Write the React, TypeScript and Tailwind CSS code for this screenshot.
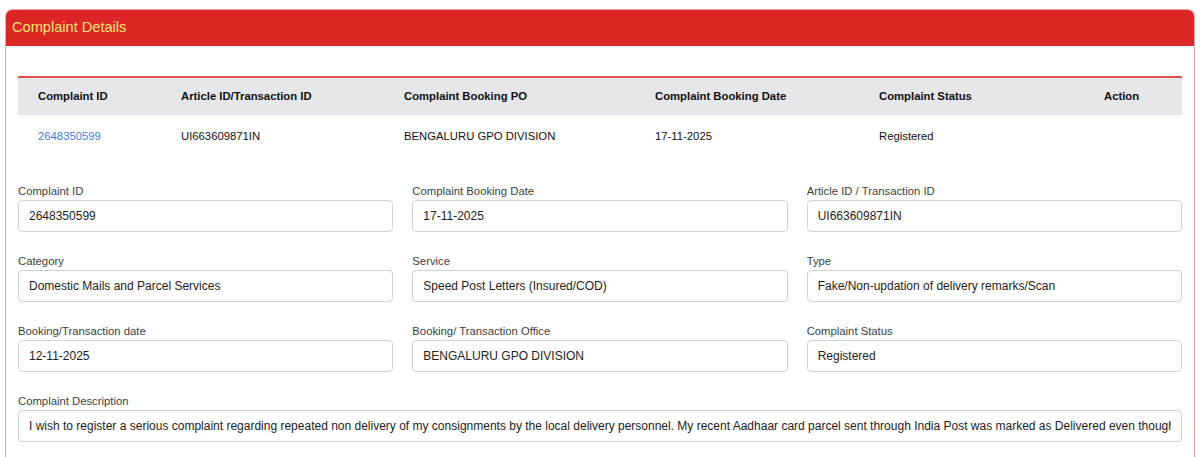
import React from "react";

const cols = [
  { label: "Complaint ID", w: "w-[143px]" },
  { label: "Article ID/Transaction ID", w: "w-[223px]" },
  { label: "Complaint Booking PO", w: "w-[251px]" },
  { label: "Complaint Booking Date", w: "w-[224px]" },
  { label: "Complaint Status", w: "w-[225px]" },
  { label: "Action", w: "" },
];

const fields = [
  { label: "Complaint ID", value: "2648350599" },
  { label: "Complaint Booking Date", value: "17-11-2025" },
  { label: "Article ID / Transaction ID", value: "UI663609871IN" },
  { label: "Category", value: "Domestic Mails and Parcel Services" },
  { label: "Service", value: "Speed Post Letters (Insured/COD)" },
  { label: "Type", value: "Fake/Non-updation of delivery remarks/Scan" },
  { label: "Booking/Transaction date", value: "12-11-2025" },
  { label: "Booking/ Transaction Office", value: "BENGALURU GPO DIVISION" },
  { label: "Complaint Status", value: "Registered" },
];

const description =
  "I wish to register a serious complaint regarding repeated non delivery of my consignments by the local delivery personnel. My recent Aadhaar card parcel sent through India Post was marked as Delivered even though I never received it.";

function Field({ label, value }: { label: string; value: string }) {
  return (
    <div className="flex flex-col">
      <label className="mb-[2px] text-[11.3px] leading-[14px] text-[#3a3f45]">{label}</label>
      <input
        readOnly
        value={value}
        className="h-[32px] w-full rounded-[4px] border border-[#cdd2d8] bg-white px-[10px] text-[12px] text-[#1d1d1d] outline-none"
      />
    </div>
  );
}

export default function App() {
  return (
    <div className="min-h-screen bg-white pt-[9px] px-[5px] font-['Liberation_Sans',Arial,sans-serif]">
      <div className="rounded-t-[7px] border border-[#f0a3a3] overflow-hidden">
        <div className="flex h-[36px] items-center bg-[#dc2626] pl-[6px]">
          <h2 className="text-[14.6px] text-[#ffe47a]">Complaint Details</h2>
        </div>

        <div className="px-3 pt-[30px] pb-6">
          <table className="w-full border-t-2 border-[#e05252] text-[11.3px] text-[#111]">
            <thead>
              <tr className="bg-[#e5e7eb]">
                {cols.map((c) => (
                  <th key={c.label} className={`${c.w} h-[38px] pl-5 text-left font-bold`}>
                    {c.label}
                  </th>
                ))}
              </tr>
            </thead>
            <tbody>
              <tr>
                <td className="h-[43px] pl-5 text-[#3b7ee8]">2648350599</td>
                <td className="pl-5">UI663609871IN</td>
                <td className="pl-5">BENGALURU GPO DIVISION</td>
                <td className="pl-5">17-11-2025</td>
                <td className="pl-5">Registered</td>
                <td className="pl-5"></td>
              </tr>
            </tbody>
          </table>

          <div className="mt-[26px] grid grid-cols-3 gap-x-[19px] gap-y-[22px]">
            {fields.map((f) => (
              <Field key={f.label} label={f.label} value={f.value} />
            ))}
            <div className="col-span-3">
              <Field label="Complaint Description" value={description} />
            </div>
          </div>
        </div>
      </div>
    </div>
  );
}
